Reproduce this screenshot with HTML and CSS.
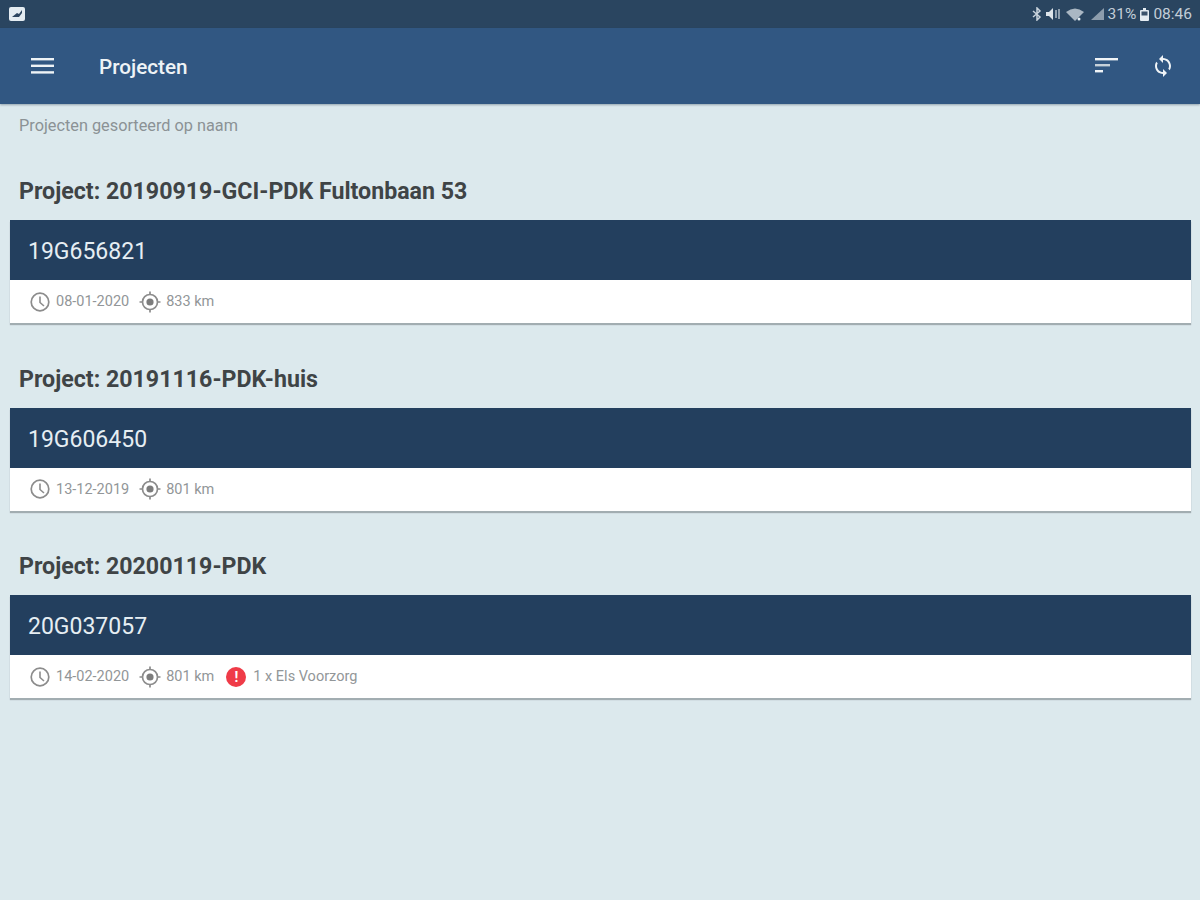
FILE: index.html
```html
<!DOCTYPE html>
<html lang="nl">
<head>
    <meta charset="UTF-8">
    <meta name="viewport" content="width=device-width, initial-scale=1.0">
    <title>Projecten</title>
    <link rel="stylesheet" href="styles.css">
</head>

<body>

<!-- Statusbalk -->
<div class="statusbar">
    <svg class="status-pic" width="16" height="14" viewBox="0 0 16 14">
        <rect x="0" y="0" width="16" height="14" rx="2" fill="#e4ecf2"/>
        <path d="M3 10 L8 6 L10 7 L13 3 L13 6 L10 10 Z" fill="#2c4560"/>
    </svg>
    <div class="status-right">
        <svg width="10" height="14" viewBox="0 0 10 14" fill="none" stroke="#c9d3dc" stroke-width="1.5">
            <path d="M1 4 L8 10 L5 13 L5 1 L8 4 L1 10"/>
        </svg>
        <svg width="16" height="12" viewBox="0 0 16 12">
            <path d="M0 4 L3 4 L7 0 L7 12 L3 8 L0 8 Z" fill="#dde4ea"/>
            <path d="M10 2 V10 M13 1 V11" stroke="#a9b6c2" stroke-width="1.6"/>
        </svg>
        <svg width="21" height="13" viewBox="0 0 21 13">
            <path d="M0 4 Q9 -3 18 4 L9 13 Z" fill="#aab7c3"/>
            <circle cx="13" cy="11" r="1.5" fill="#e4ecf2"/>
        </svg>
        <svg width="13" height="12" viewBox="0 0 13 12">
            <path d="M0 12 L13 0 L13 12 Z" fill="#8d9dac"/>
        </svg>
        <span class="status-text">31%</span>
        <svg width="9" height="13" viewBox="0 0 9 13">
            <rect x="0" y="2" width="9" height="11" rx="1" fill="#e4ecf2"/>
            <rect x="3" y="0" width="3" height="2" fill="#e4ecf2"/>
            <rect x="1.5" y="3.5" width="6" height="4" fill="#3a526b"/>
        </svg>
        <span class="status-text">08:46</span>
    </div>
</div>

<!-- Toolbar -->
<header class="toolbar">
    <svg class="menu-icon" width="24" height="18" viewBox="0 0 24 18" fill="#eef3f6">
        <rect x="0" y="1" width="23" height="2.4"/>
        <rect x="0" y="7.6" width="23" height="2.4"/>
        <rect x="0" y="14.2" width="23" height="2.4"/>
    </svg>
    <h1 class="toolbar-title">Projecten</h1>
    <div class="toolbar-actions">
        <svg width="24" height="18" viewBox="0 0 24 18" fill="#f0f4f7">
            <rect x="0" y="1" width="23" height="2.4"/>
            <rect x="0" y="7" width="15" height="2.4" fill="#c6d1da"/>
            <rect x="0" y="13" width="8" height="2.4"/>
        </svg>
        <svg width="24" height="28" viewBox="0 0 24 24" fill="#f0f4f7">
            <path d="M12 4V1L8 5l4 4V6c3.310 0 6 2.690 6 6 0 1.010-.25 1.970-.7 2.800l1.460 1.460A7.930 7.930 0 0 0 20 12c0-4.420-3.580-8-8-8zm0 14c-3.310 0-6-2.690-6-6 0-1.010.25-1.970.7-2.800L5.240 7.740A7.930 7.930 0 0 0 4 12c0 4.420 3.580 8 8 8v3l4-4-4-4v3z"/>
        </svg>
    </div>
</header>

<main class="content">
    <p class="sort-label">Projecten gesorteerd op naam</p>

    <section class="project">
        <h2 class="project-title">Project: 20190919-GCI-PDK Fultonbaan 53</h2>
        <div class="card">
            <div class="card-head">19G656821</div>
            <div class="card-info">
                <svg class="icon" width="22" height="22" viewBox="0 0 22 22"><use href="#clock"/></svg>
                <span class="info-text">08-01-2020</span>
                <svg class="icon icon-gps" width="24" height="24" viewBox="0 0 24 24"><use href="#gps"/></svg>
                <span class="info-text info-km">833 km</span>
            </div>
        </div>
    </section>

    <section class="project">
        <h2 class="project-title">Project: 20191116-PDK-huis</h2>
        <div class="card">
            <div class="card-head">19G606450</div>
            <div class="card-info">
                <svg class="icon" width="22" height="22" viewBox="0 0 22 22"><use href="#clock"/></svg>
                <span class="info-text">13-12-2019</span>
                <svg class="icon icon-gps" width="24" height="24" viewBox="0 0 24 24"><use href="#gps"/></svg>
                <span class="info-text info-km">801 km</span>
            </div>
        </div>
    </section>

    <section class="project">
        <h2 class="project-title">Project: 20200119-PDK</h2>
        <div class="card">
            <div class="card-head">20G037057</div>
            <div class="card-info">
                <svg class="icon" width="22" height="22" viewBox="0 0 22 22"><use href="#clock"/></svg>
                <span class="info-text">14-02-2020</span>
                <svg class="icon icon-gps" width="24" height="24" viewBox="0 0 24 24"><use href="#gps"/></svg>
                <span class="info-text info-km">801 km</span>
                <span class="alert-dot">!</span>
                <span class="info-text">1 x Els Voorzorg</span>
            </div>
        </div>
    </section>
</main>

<!-- Iconen -->
<svg class="icon-defs" width="0" height="0">
    <symbol id="clock" viewBox="0 0 22 22">
        <circle cx="11" cy="11" r="8.800" fill="none" stroke="#8c8c8c" stroke-width="1.700"/>
        <path d="M11 5.500 V11.500 L15 15" fill="none" stroke="#8c8c8c" stroke-width="1.600"/>
    </symbol>
    <symbol id="gps" viewBox="0 0 24 24">
        <circle cx="12" cy="12" r="7.500" fill="none" stroke="#8c8c8c" stroke-width="1.700"/>
        <circle cx="12" cy="12" r="3.600" fill="#7c7c7c"/>
        <path d="M12 1.500 V4.500 M12 19.500 V22.500 M1.500 12 H4.500 M19.500 12 H22.500" stroke="#8c8c8c" stroke-width="1.700"/>
    </symbol>
</svg>

</body>
</html>
```

FILE: styles.css
```css
* {
    box-sizing: border-box;
}

body {
    margin: 0;
    padding: 0;
    font-family: 'Roboto', sans-serif;
    background: #dce9ed;
    color: #3f4446;
    height: 900px;
    overflow: hidden;
}

.statusbar {
    height: 28px;
    background: #2a4560;
    display: flex;
    align-items: center;
    justify-content: space-between;
    padding: 0 8px 0 9px;
}
.status-right {
    display: flex;
    align-items: center;
    gap: 4px;
}
.status-text {
    font-size: 15.500px;
    color: #c3ced8;
}

.toolbar {
    height: 76px;
    background: #315782;
    display: flex;
    align-items: center;
    padding: 0 25px 0 31px;
    color: #ffffff;
    box-shadow: 0 1px 2px rgba(40, 60, 80, 0.4);
}
.menu-icon {
    margin-right: 44px;
}
.toolbar-title {
    font-size: 20.700px;
    font-weight: 500;
    margin: 0;
    padding-top: 2px;
    color: #eef3f6;
}
.toolbar-actions {
    margin-left: auto;
    display: flex;
    align-items: center;
    gap: 32px;
}

.content {
    padding: 0 9px 0 10px;
}
.sort-label {
    margin: 0;
    padding: 13px 0 0 9px;
    font-size: 16.300px;
    line-height: 17px;
    color: #8b9295;
}

.project-title {
    margin: 0;
    padding-left: 9px;
    font-size: 23.200px;
    font-weight: 700;
    line-height: 26px;
    padding-top: 44px;
    padding-bottom: 16px;
    color: #3f4446;
}
.project + .project .project-title {
    padding-top: 42.500px;
}

.card {
    background: #ffffff;
    box-shadow: 0 2px 1px rgba(90, 100, 105, 0.45);
}
.card-head {
    height: 60px;
    background: #233f5e;
    color: #e6eef3;
    font-size: 23px;
    line-height: 63px;
    padding-left: 18px;
}
.card-info {
    height: 43px;
    display: flex;
    align-items: center;
    padding-left: 19px;
}
.icon {
    flex: none;
}
.icon-gps {
    margin-left: 9px;
}
.info-text {
    font-size: 14.500px;
    color: #929698;
    margin-left: 5px;
}
.info-km {
    margin-left: 4px;
}
.alert-dot {
    width: 20px;
    height: 20px;
    border-radius: 50%;
    background: #ef3b48;
    color: #ffffff;
    font-size: 14px;
    font-weight: 700;
    line-height: 20px;
    text-align: center;
    margin-left: 12px;
    margin-right: 2px;
}

.icon-defs {
    position: absolute;
}
```
